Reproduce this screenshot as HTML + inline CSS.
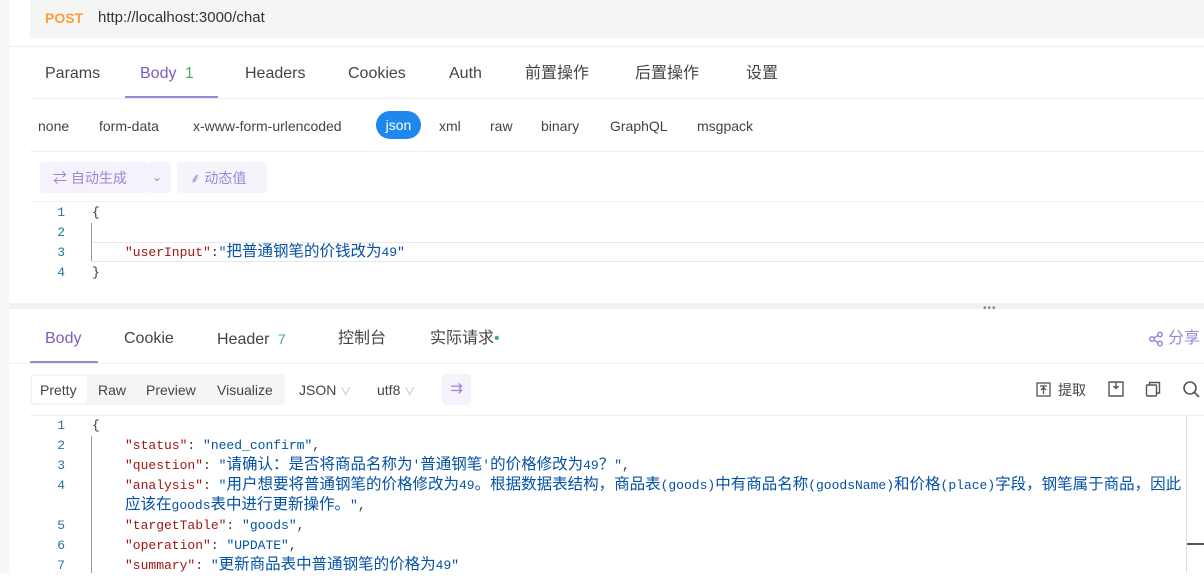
<!DOCTYPE html>
<html><head><meta charset="utf-8"><style>
*{margin:0;padding:0;box-sizing:border-box}
body{width:1204px;height:573px;overflow:hidden;background:#fff;font-family:"Liberation Sans","Noto Sans CJK SC",sans-serif;color:#333;position:relative}
.a{position:absolute;white-space:nowrap;line-height:20px}
.mono{font-family:"Liberation Mono","Noto Sans CJK SC",monospace;font-size:13px;height:20px}
.k{color:#a31515}.s{color:#0451a5}.ln{color:#237893;font-family:"Liberation Mono",monospace;font-size:13px;width:20px;text-align:right}
.cn{font-family:"Noto Sans CJK SC",sans-serif;font-size:15.5px;line-height:1;vertical-align:baseline}
.t{font-size:16px;color:#444}
</style></head><body>
<div class="a" style="left:0;top:0;width:9px;height:573px;background:#f7f7f7"></div>
<div class="a" style="left:30px;top:0;width:1174px;height:38px;background:#f5f5f5"></div>
<div class="a" style="left:45px;top:8px;font-size:14px;font-weight:bold;color:#f5a03c">POST</div>
<div class="a" style="left:98px;top:8px;font-size:15px;color:#333">http://localhost:3000/chat</div>
<div class="a" style="left:9px;top:46px;width:1195px;height:1px;background:#eee"></div>
<div class="a t" style="top:64px;left:45px">Params</div>
<div class="a t" style="top:64px;left:140px;color:#7c5cc4">Body <span style="color:#3cb371;margin-left:4px">1</span></div>
<div class="a" style="left:125px;top:96px;width:93px;height:3px;background:#9c84d6"></div>
<div class="a t" style="top:64px;left:245px">Headers</div>
<div class="a t" style="top:64px;left:348px">Cookies</div>
<div class="a t" style="top:64px;left:449px">Auth</div>
<div class="a t" style="top:64px;left:525px">前置操作</div>
<div class="a t" style="top:64px;left:635px">后置操作</div>
<div class="a t" style="top:64px;left:746px">设置</div>
<div class="a" style="left:30px;top:98px;width:1174px;height:1px;background:#eee"></div>
<div class="a" style="top:116px;left:38px;font-size:14px;color:#444">none</div>
<div class="a" style="top:116px;left:99px;font-size:14px;color:#444">form-data</div>
<div class="a" style="top:116px;left:193px;font-size:14px;color:#444">x-www-form-urlencoded</div>
<div class="a" style="top:111px;left:376px;width:45px;height:28px;border-radius:14px;background:#1f88ef;color:#fff;font-size:14px;text-align:center;line-height:28px">json</div>
<div class="a" style="top:116px;left:439px;font-size:14px;color:#444">xml</div>
<div class="a" style="top:116px;left:490px;font-size:14px;color:#444">raw</div>
<div class="a" style="top:116px;left:541px;font-size:14px;color:#444">binary</div>
<div class="a" style="top:116px;left:610px;font-size:14px;color:#444">GraphQL</div>
<div class="a" style="top:116px;left:697px;font-size:14px;color:#444">msgpack</div>
<div class="a" style="left:30px;top:151px;width:1174px;height:1px;background:#f0f0f0"></div>
<div class="a" style="left:40px;top:162px;width:109px;height:31px;background:#f5f2fb;border-radius:4px"></div>
<div class="a" style="left:149px;top:162px;width:22px;height:31px;background:#f5f2fb;border-radius:4px"></div>
<div class="a" style="left:53px;top:168px;font-size:14px;color:#9b86d8">⇄ 自动生成</div>
<div class="a" style="left:152px;top:167px;font-size:12px;color:#9b86d8">⌄</div>
<div class="a" style="left:177px;top:162px;width:90px;height:31px;background:#f6f4fb;border-radius:4px"></div>
<div class="a" style="left:190px;top:168px;font-size:14px;color:#9b86d8">⸙ 动态值</div>
<div class="a" style="left:30px;top:201px;width:1174px;height:1px;background:#f0f0f0"></div>
<div class="a ln" style="left:45px;top:203px">1</div>
<div class="a ln" style="left:45px;top:223px">2</div>
<div class="a ln" style="left:45px;top:243px">3</div>
<div class="a ln" style="left:45px;top:263px">4</div>
<div class="a mono" style="left:92px;top:203px">{</div>
<div class="a" style="left:91px;top:223px;width:1px;height:38px;background:#999"></div>
<div class="a" style="left:92px;top:242px;width:1112px;height:20px;border-top:1px solid #e8e8e8;border-bottom:1px solid #e8e8e8"></div>
<div class="a mono" style="left:125px;top:243px"><span class="k">"userInput"</span>:<span class="s">"<span class="cn">把普通钢笔的价钱改为</span>49"</span></div>
<div class="a mono" style="left:92px;top:263px">}</div>
<div class="a" style="left:9px;top:303px;width:1195px;height:6px;background:#f1f1f1"></div>
<div class="a" style="left:983px;top:299px;font-size:10px;color:#888;letter-spacing:1px">•••</div>
<div class="a t" style="top:329px;left:45px;color:#7c5cc4">Body</div>
<div class="a" style="left:30px;top:361px;width:68px;height:3px;background:#9c84d6"></div>
<div class="a t" style="top:329px;left:124px">Cookie</div>
<div class="a t" style="top:329px;left:217px">Header <span style="color:#3cb371;margin-left:4px;font-size:14px">7</span></div>
<div class="a t" style="top:329px;left:338px">控制台</div>
<div class="a t" style="top:329px;left:430px">实际请求<span style="color:#3cb371">•</span></div>
<svg class="a" style="left:1148px;top:331px" width="16" height="16" viewBox="0 0 16 16" fill="none" stroke="#9b86d8" stroke-width="1.5"><circle cx="4" cy="8" r="2.2"/><circle cx="12" cy="3.5" r="2.2"/><circle cx="12" cy="12.5" r="2.2"/><path d="M6 7l4-2.5M6 9l4 2.5"/></svg>
<div class="a t" style="top:329px;left:1168px;color:#9b86d8">分享</div>
<div class="a" style="left:9px;top:363px;width:1195px;height:1px;background:#f0f0f0"></div>
<div class="a" style="left:30px;top:374px;width:255px;height:31px;background:#f5f5f5;border-radius:4px"></div>
<div class="a" style="left:32px;top:376px;width:55px;height:27px;background:#fff;border-radius:3px"></div>
<div class="a" style="top:380px;left:40px;font-size:14px;color:#444">Pretty</div>
<div class="a" style="top:380px;left:98px;font-size:14px;color:#444">Raw</div>
<div class="a" style="top:380px;left:146px;font-size:14px;color:#444">Preview</div>
<div class="a" style="top:380px;left:217px;font-size:14px;color:#444">Visualize</div>
<div class="a" style="top:380px;left:299px;font-size:14px;color:#444">JSON <span style="color:#bbb;font-size:11px">∨</span></div>
<div class="a" style="top:380px;left:377px;font-size:14px;color:#444">utf8 <span style="color:#bbb;font-size:11px">∨</span></div>
<div class="a" style="left:442px;top:374px;width:29px;height:31px;background:#f5f2fb;border-radius:4px;color:#9b86d8;text-align:center;line-height:30px;font-size:15px">⇉</div>
<svg class="a" style="left:1036px;top:382px" width="15" height="15" viewBox="0 0 15 15" fill="none" stroke="#555" stroke-width="1.3"><rect x="1" y="1" width="13" height="13"/><path d="M4 4h7M7.5 4v8M5 8l2.5-2.5L10 8"/></svg>
<div class="a" style="top:380px;left:1058px;font-size:14px;color:#444">提取</div>
<svg class="a" style="left:1108px;top:381px" width="16" height="16" viewBox="0 0 16 16" fill="none" stroke="#555" stroke-width="1.4"><path d="M1 1h14v14H1zM8 1v6M5.5 5L8 7.5 10.5 5"/></svg>
<svg class="a" style="left:1145px;top:381px" width="16" height="16" viewBox="0 0 16 16" fill="none" stroke="#555" stroke-width="1.4"><rect x="1.5" y="4" width="10" height="11" rx="1"/><path d="M4.5 4V1.5H14.5V12H11.5"/></svg>
<svg class="a" style="left:1182px;top:380px" width="18" height="18" viewBox="0 0 18 18" fill="none" stroke="#555" stroke-width="1.6"><circle cx="8" cy="8" r="6"/><path d="M12.5 12.5L17 17"/></svg>
<div class="a" style="left:30px;top:415px;width:1174px;height:1px;background:#f0f0f0"></div>
<div class="a" style="left:1186px;top:416px;width:1px;height:157px;background:#ddd"></div>
<div class="a" style="left:1187px;top:543px;width:17px;height:2px;background:#555"></div>
<div class="a ln" style="left:45px;top:416px">1</div>
<div class="a ln" style="left:45px;top:436px">2</div>
<div class="a ln" style="left:45px;top:456px">3</div>
<div class="a ln" style="left:45px;top:476px">4</div>
<div class="a ln" style="left:45px;top:516px">5</div>
<div class="a ln" style="left:45px;top:536px">6</div>
<div class="a ln" style="left:45px;top:556px">7</div>
<div class="a" style="left:91px;top:436px;width:1px;height:137px;background:#999"></div>
<div class="a mono" style="left:92px;top:416px">{</div>
<div class="a mono" style="left:125px;top:436px"><span class="k">"status"</span>: <span class="s">"need_confirm"</span>,</div>
<div class="a mono" style="left:125px;top:456px"><span class="k">"question"</span>: <span class="s">"<span class="cn">请确认：是否将商品名称为</span>'<span class="cn">普通钢笔</span>'<span class="cn">的价格修改为</span>49<span class="cn">？</span>"</span>,</div>
<div class="a mono" style="left:125px;top:476px"><span class="k">"analysis"</span>: <span class="s">"<span class="cn">用户想要将普通钢笔的价格修改为</span>49<span class="cn">。根据数据表结构，商品表</span>(goods)<span class="cn">中有商品名称</span>(goodsName)<span class="cn">和价格</span>(place)<span class="cn">字段，钢笔属于商品，因此</span></span></div>
<div class="a mono" style="left:125px;top:496px"><span class="s"><span class="cn">应该在</span>goods<span class="cn">表中进行更新操作。</span>"</span>,</div>
<div class="a mono" style="left:125px;top:516px"><span class="k">"targetTable"</span>: <span class="s">"goods"</span>,</div>
<div class="a mono" style="left:125px;top:536px"><span class="k">"operation"</span>: <span class="s">"UPDATE"</span>,</div>
<div class="a mono" style="left:125px;top:556px"><span class="k">"summary"</span>: <span class="s">"<span class="cn">更新商品表中普通钢笔的价格为</span>49"</span></div>
</body></html>
